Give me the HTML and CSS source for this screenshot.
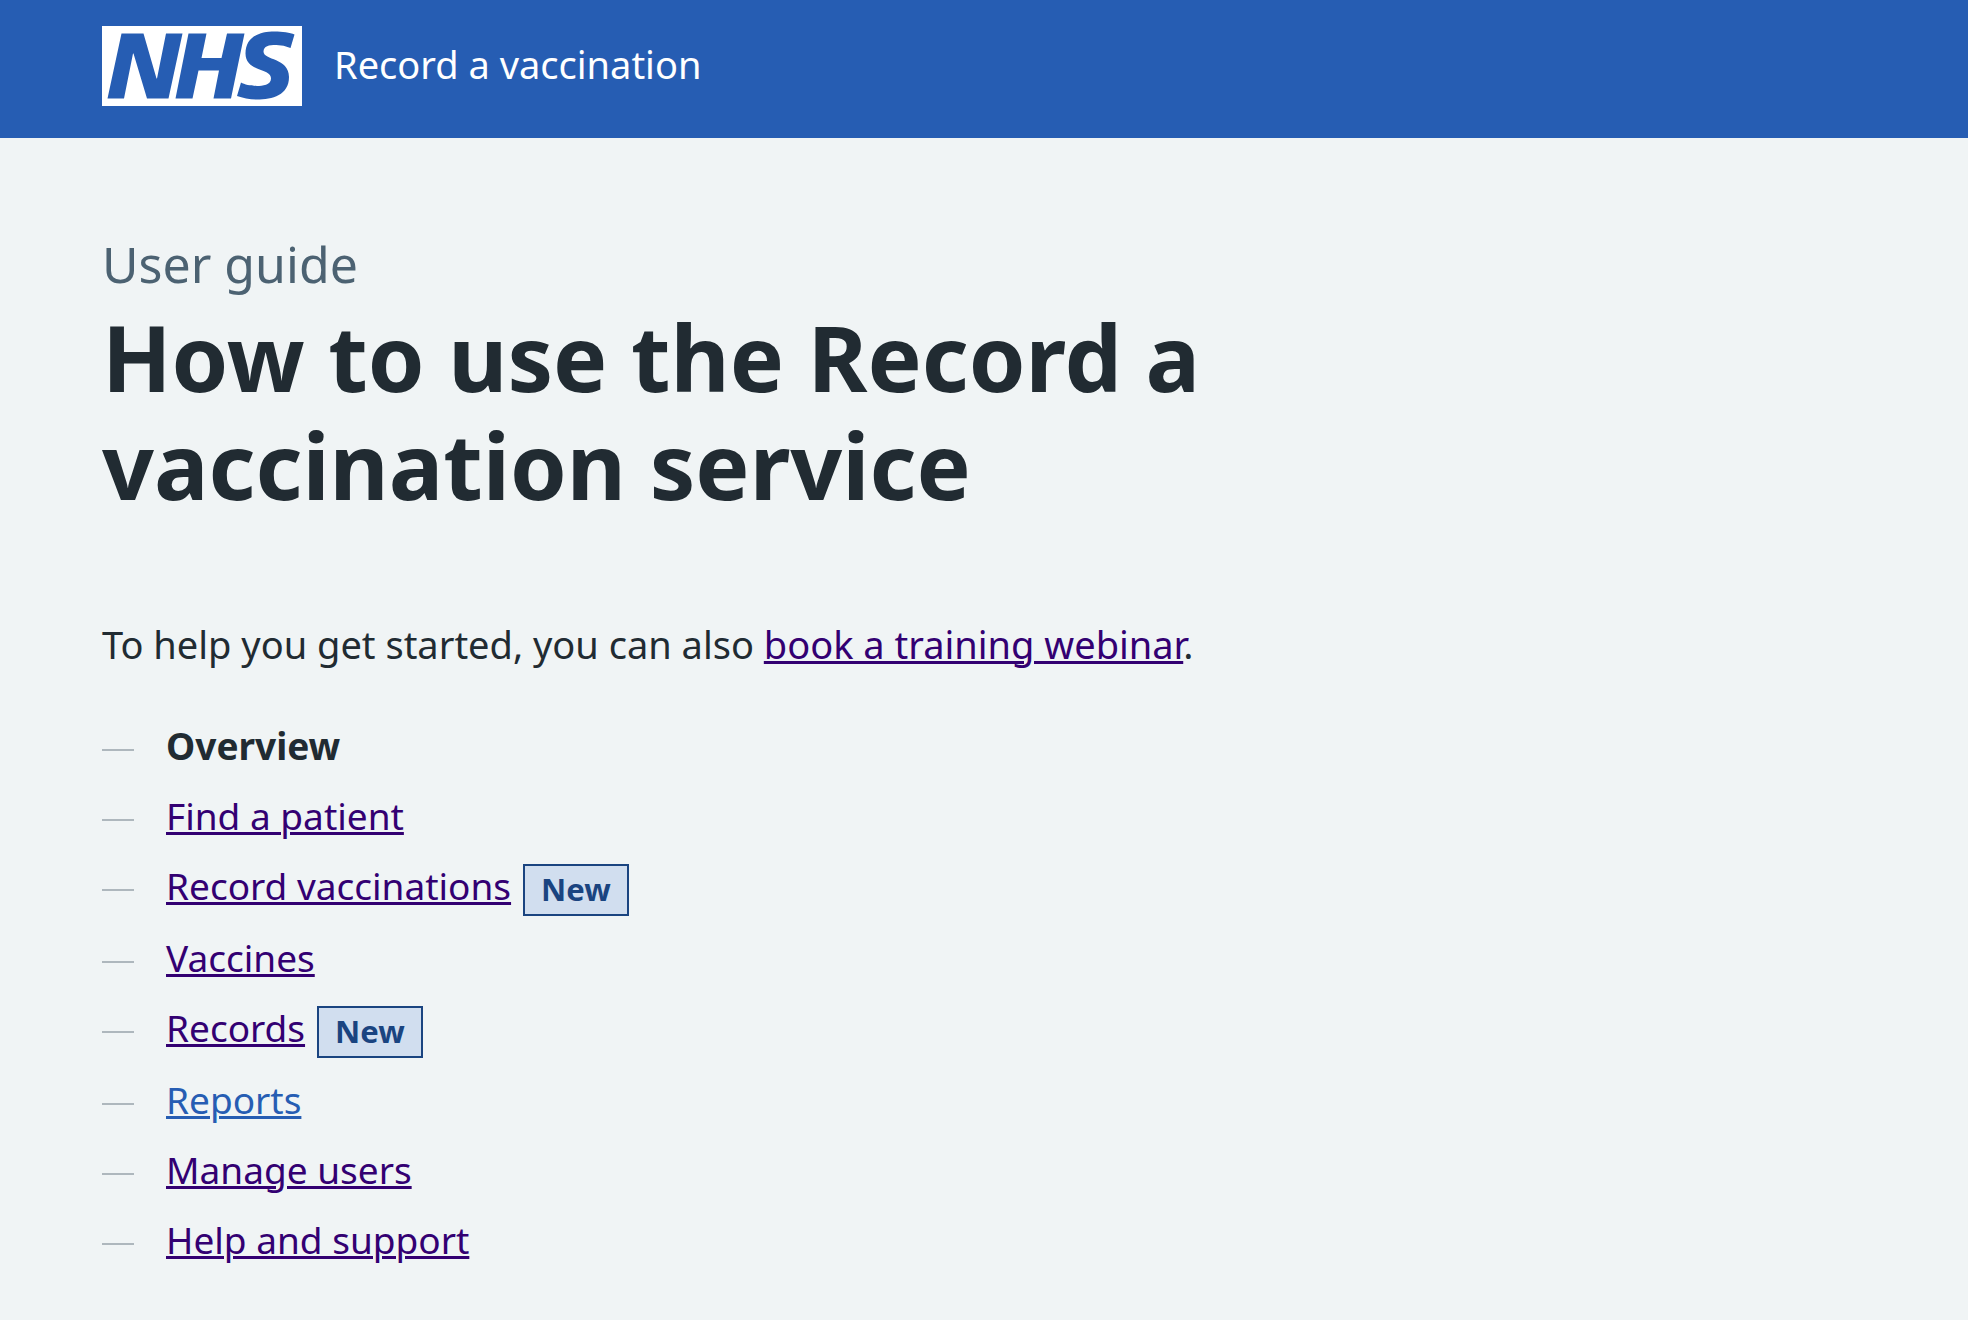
FILE: index.html
```html
<!DOCTYPE html>
<html lang="en">
<head>
<meta charset="utf-8">
<meta name="viewport" content="width=device-width, initial-scale=1">
<title>User guide - Record a vaccination</title>
<link rel="stylesheet" href="styles.css">
</head>
<body>
<header class="header">
  <svg class="logo" role="img" aria-label="NHS" viewBox="0 0 200 80" width="200" height="80">
    <path fill="#fff" d="M200 0v80H0V0h200Zm-27.5 5.5c-14.5 0-29 5-29 22 0 10.2 7.7 13.5 14.7 16.3l.7.3c5.4 2 10.1 3.9 10.1 8.4 0 6.5-8.5 7.5-14 7.5s-12.500-1.500-16-3.500L135 70c5.500 2 13.500 3.500 20 3.500 15.500 0 32-4.500 32-22.500 0-19.500-25.500-16.500-25.500-25.500 0-5.500 5.500-6.500 12.500-6.500a35 35 0 0 1 14.500 3l4-13.500c-4.500-2-12-3-20-3Zm-131 2h-22l-14 65H22l9-45h.5l13.500 45h21.500l14-65H64l-9 45h-.5l-13-45Zm63 0h-18l-13 65h17l6-28H117l-5.500 28H129l13.500-65H125L119.500 32h-20l5-24.500Z"/>
  </svg>
  <span class="service">Record a vaccination</span>
</header>
<main class="main">
  <h1 class="title"><span class="caption">User guide</span>How to use the Record a vaccination service</h1>
  <p class="intro">To help you get started, you can also <a class="link" href="#webinar">book a training webinar</a>.</p>
  <nav aria-label="User guide pages">
    <ul class="contents">
      <li class="item item--current" aria-current="page">Overview</li>
      <li class="item"><a class="link" href="#find">Find a patient</a></li>
      <li class="item"><a class="link" href="#record">Record vaccinations</a><strong class="tag">New</strong></li>
      <li class="item"><a class="link" href="#vaccines">Vaccines</a></li>
      <li class="item"><a class="link" href="#records">Records</a><strong class="tag">New</strong></li>
      <li class="item"><a class="link link--unvisited" href="#reports">Reports</a></li>
      <li class="item"><a class="link" href="#users">Manage users</a></li>
      <li class="item"><a class="link" href="#help">Help and support</a></li>
    </ul>
  </nav>
</main>
</body>
</html>
```
FILE: styles.css
```css
* { box-sizing: border-box; }

body {
  margin: 0;
  background: #f0f4f5;
  color: #212b32;
  font-family: "Noto Sans", "Open Sans", sans-serif;
  font-size: 38px;
  line-height: 56px;
}

.header {
  display: flex;
  align-items: flex-start;
  gap: 32px;
  padding: 26px 102px 32px;
  background: #265db3;
  color: #fff;
}

.logo { display: block; flex: none; }

.service { line-height: 76px; }

.main { padding: 88px 102px 32px; }

.title {
  max-width: 1176px;
  margin: 0 0 97px;
  font-size: 91px;
  font-weight: 700;
  line-height: 108px;
}

.caption {
  display: block;
  margin-bottom: 1px;
  color: #4c6272;
  font-size: 50px;
  font-weight: 400;
  line-height: 76px;
}

.intro { margin: 0 0 46px; }

.link {
  color: #330072;
  text-decoration: underline;
  text-decoration-thickness: 3px;
  text-underline-offset: 2px;
}

.link--unvisited { color: #265db3; }

.contents {
  display: flex;
  flex-direction: column;
  gap: 14px;
  margin: 0;
  padding: 0;
  font-size: 37px;
  list-style: none;
}

.item { display: flex; align-items: flex-start; }

.item::before {
  content: "";
  width: 32px;
  height: 2px;
  margin: 31px 32px 0 0;
  background: #aeb7bd;
}

.item--current { font-weight: 700; }

.tag {
  margin: 6px 0 0 12px;
  padding: 3px 16px 5px;
  border: 2px solid #1a4480;
  background: #d1deef;
  color: #1a4480;
  font-size: 31px;
  line-height: 40px;
}
```
